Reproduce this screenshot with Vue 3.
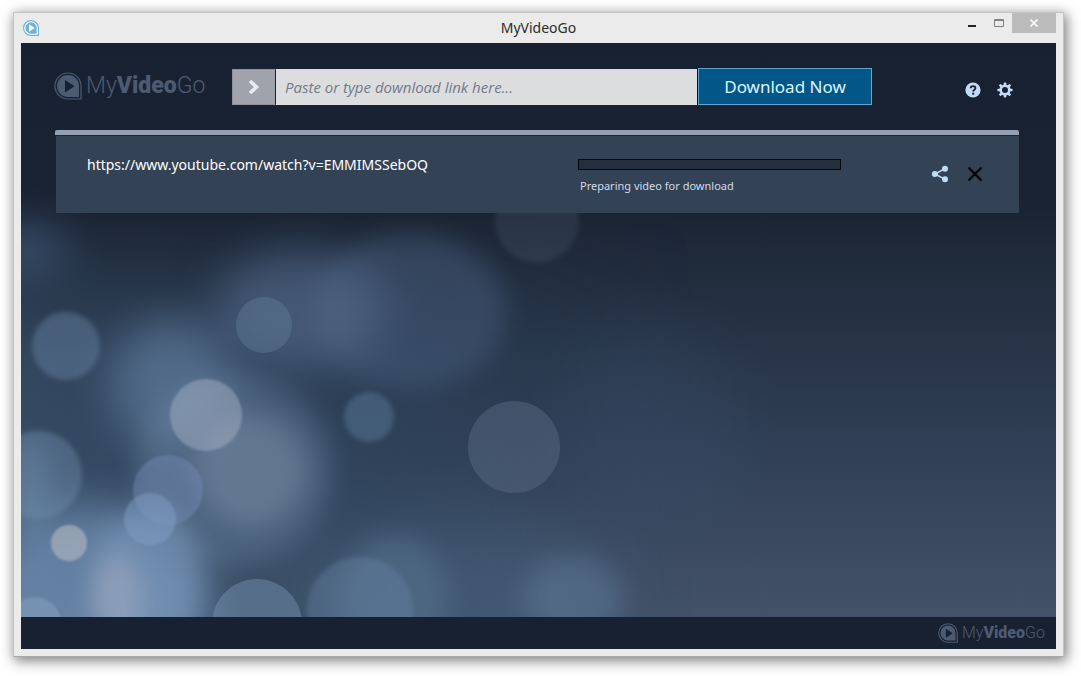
<script setup>
import { ref } from 'vue'

const link = ref('')
const downloads = ref([
  {
    id: 1,
    url: 'https://www.youtube.com/watch?v=EMMIMSSebOQ',
    status: 'Preparing video for download',
    progress: 0,
  },
])

const glows = [
  { cx: 25, cy: 250, rx: 44, ry: 26, fill: '#3f5878', o: 0.75, f: 'soft' },
  { cx: 410, cy: 312, rx: 96, ry: 78, fill: '#4a6080', o: 0.46, f: 'mid' },
  { cx: 300, cy: 310, rx: 85, ry: 58, fill: '#5c7395', o: 0.55, f: 'soft' },
  { cx: 172, cy: 385, rx: 62, ry: 65, fill: '#6885a8', o: 0.6, f: 'soft' },
  { cx: 234, cy: 470, rx: 98, ry: 96, fill: '#7590b0', o: 0.34, f: 'mid' },
  { cx: 250, cy: 470, rx: 56, ry: 56, fill: '#8fa3b8', o: 0.36, f: 'mid' },
  { cx: 90, cy: 605, rx: 120, ry: 100, fill: '#7fa0c8', o: 0.6, f: 'soft' },
  { cx: 148, cy: 580, rx: 54, ry: 70, fill: '#8aa6ca', o: 0.36, f: 'mid' },
  { cx: 116, cy: 605, rx: 26, ry: 50, fill: '#b7b9c8', o: 0.38, f: 'mid' },
  { cx: 30, cy: 490, rx: 20, ry: 50, fill: '#79a0c0', o: 0.35, f: 'mid' },
  { cx: 395, cy: 597, rx: 54, ry: 62, fill: '#5f7b99', o: 0.45, f: 'mid' },
  { cx: 650, cy: 430, rx: 90, ry: 110, fill: '#3d5270', o: 0.24, f: 'wide' },
  { cx: 460, cy: 590, rx: 170, ry: 70, fill: '#53718f', o: 0.3, f: 'wide' },
  { cx: 572, cy: 598, rx: 50, ry: 42, fill: '#64809d', o: 0.42, f: 'mid' },
]

const discs = [
  { cx: 537, cy: 221, r: 42, fill: '#5c6b85', o: 0.22, f: 'edge' },
  { cx: 66, cy: 346, r: 34, fill: '#6c89ab', o: 0.42, f: 'edge' },
  { cx: 264, cy: 325, r: 28, fill: '#6e8ba3', o: 0.32, f: 'crisp' },
  { cx: 206, cy: 415, r: 36, fill: '#a9b4c8', o: 0.46, f: 'fine' },
  { cx: 369, cy: 417, r: 25, fill: '#5e7d9c', o: 0.46, f: 'edge' },
  { cx: 514, cy: 447, r: 46, fill: '#64748f', o: 0.38, f: 'crisp' },
  { cx: 38, cy: 475, r: 44, fill: '#7793b5', o: 0.38, f: 'edge' },
  { cx: 168, cy: 490, r: 35, fill: '#7d93c0', o: 0.38, f: 'fine' },
  { cx: 150, cy: 519, r: 26, fill: '#86a5cb', o: 0.42, f: 'fine' },
  { cx: 69, cy: 543, r: 18, fill: '#b4b8c2', o: 0.62, f: 'fine' },
  { cx: 257, cy: 624, r: 45, fill: '#7f9dbd', o: 0.4, f: 'crisp' },
  { cx: 360, cy: 610, r: 53, fill: '#6c88ab', o: 0.36, f: 'edge' },
  { cx: 35, cy: 623, r: 26, fill: '#a2bbd6', o: 0.3, f: 'fine' },
]

function remove(id) {
  downloads.value = downloads.value.filter((d) => d.id !== id)
}
</script>

<template>
  <div class="desktop">
    <div class="window">
      <div class="titlebar">
        <svg class="app-icon" viewBox="0 0 28 28" aria-hidden="true">
          <path d="M14 1H14A13 13 0 1 0 14 27H27V14A13 13 0 0 0 14 1Z" fill="#fff" stroke="#6db5d2" stroke-width="2" />
          <path d="M14 4A10 10 0 1 0 14 24H24V14A10 10 0 0 0 14 4Z" fill="#6db5d2" />
          <path d="M10.500 7.500V20.500L20.500 14Z" fill="#fff" />
        </svg>
        <h1 class="title">MyVideoGo</h1>
        <div class="controls">
          <button class="ctl" type="button" aria-label="Minimize">
            <svg width="10" height="12" viewBox="0 0 10 12"><path d="M1 8h8v2H1z" fill="#222" /></svg>
          </button>
          <button class="ctl" type="button" aria-label="Maximize">
            <svg width="12" height="12" viewBox="0 0 12 12"><path d="M1.500 2.500h9v7h-9zM1.500 3.500h9" fill="none" stroke="#808080" /></svg>
          </button>
          <button class="ctl close" type="button" aria-label="Close">
            <svg width="10" height="10" viewBox="0 0 10 10"><path d="M1.500 1.500l7 7M8.500 1.500l-7 7" stroke="#fff" stroke-width="1.600" /></svg>
          </button>
        </div>
      </div>

      <div class="client">
        <main class="stage">
          <svg class="backdrop" viewBox="21 43 1035 574" preserveAspectRatio="none" color-interpolation-filters="sRGB" aria-hidden="true">
            <defs>
              <linearGradient id="sky" x1="0" y1="0" x2="0" y2="1">
                <stop offset="0" stop-color="#182131" />
                <stop offset="0.28" stop-color="#1a2333" />
                <stop offset="0.42" stop-color="#222d3e" />
                <stop offset="0.7" stop-color="#303f55" />
                <stop offset="1" stop-color="#435268" />
              </linearGradient>
              <linearGradient id="haze" x1="0" y1="0" x2="1" y2="0">
                <stop offset="0" stop-color="#3a5570" stop-opacity="0.55" />
                <stop offset="0.35" stop-color="#2c4660" stop-opacity="0.4" />
                <stop offset="0.65" stop-color="#2c4660" stop-opacity="0" />
              </linearGradient>
              <linearGradient id="fade" x1="0" y1="0" x2="0" y2="1">
                <stop offset="0.3" stop-color="#000" />
                <stop offset="0.55" stop-color="#fff" />
              </linearGradient>
              <mask id="lower"><rect x="21" y="43" width="1035" height="574" fill="url(#fade)" /></mask>
              <filter id="wide" x="-80%" y="-80%" width="260%" height="260%"><feGaussianBlur stdDeviation="32" /></filter>
              <filter id="soft" x="-80%" y="-80%" width="260%" height="260%"><feGaussianBlur stdDeviation="22" /></filter>
              <filter id="mid" x="-80%" y="-80%" width="260%" height="260%"><feGaussianBlur stdDeviation="12" /></filter>
              <filter id="edge" x="-30%" y="-30%" width="160%" height="160%"><feGaussianBlur stdDeviation="2.500" /></filter>
              <filter id="fine" x="-30%" y="-30%" width="160%" height="160%"><feGaussianBlur stdDeviation="1" /></filter>
              <filter id="crisp" x="-30%" y="-30%" width="160%" height="160%"><feGaussianBlur stdDeviation="0.300" /></filter>
            </defs>
            <rect x="21" y="43" width="1035" height="574" fill="url(#sky)" />
            <rect x="21" y="43" width="1035" height="574" fill="url(#haze)" mask="url(#lower)" />
            <ellipse
              v-for="(g, i) in glows" :key="'g' + i"
              :cx="g.cx" :cy="g.cy" :rx="g.rx" :ry="g.ry"
              :fill="g.fill" :opacity="g.o" :filter="`url(#${g.f})`"
            />
            <circle
              v-for="(d, i) in discs" :key="'d' + i"
              :cx="d.cx" :cy="d.cy" :r="d.r"
              :fill="d.fill" :opacity="d.o" :filter="`url(#${d.f})`"
            />
          </svg>

          <header class="toolbar">
            <div class="brand">
              <svg class="mark" viewBox="0 0 28 28" aria-hidden="true">
                <path d="M14 1A13 13 0 1 0 14 27H27V14A13 13 0 0 0 14 1Z" fill="none" stroke="#4c5b72" stroke-width="1.200" />
                <path d="M14 3A11 11 0 1 0 14 25H25V14A11 11 0 0 0 14 3Z" fill="#4c5b72" />
                <path d="M11 8V20.500L20.500 14.200Z" fill="#182131" />
              </svg>
              <span class="word">My<b>Video</b>Go</span>
            </div>
            <form class="linkbar" @submit.prevent>
              <button class="go" type="button" aria-label="Paste link">
                <svg width="12" height="16" viewBox="0 0 12 16"><path d="M2 2l6.500 6L2 14" fill="none" stroke="#e9ebf3" stroke-width="3.600" /></svg>
              </button>
              <input v-model="link" class="link" type="text" aria-label="Download link" placeholder="Paste or type download link here..." />
              <button class="download" type="submit">Download Now</button>
            </form>
            <div class="tools">
              <button class="icon" type="button" aria-label="Help">
                <svg width="16" height="16" viewBox="0 0 16 16">
                  <circle cx="8" cy="8" r="7.600" fill="#c3dcf6" />
                  <path d="M5.700 6.200C5.700 3.400 10.500 3.500 10.400 6.100C10.400 7.800 8.200 7.700 8.200 9.600" fill="none" stroke="#182131" stroke-width="1.900" />
                  <rect x="7.200" y="10.700" width="2" height="2" fill="#182131" />
                </svg>
              </button>
              <button class="icon" type="button" aria-label="Settings">
                <svg width="16" height="16" viewBox="0 0 16 16">
                  <g fill="#c3dcf6">
                    <rect v-for="n in 4" :key="n" x="6.700" y="0.400" width="2.600" height="15.200" rx="0.800" :transform="`rotate(${n * 45} 8 8)`" />
                    <circle cx="8" cy="8" r="5.600" />
                  </g>
                  <circle cx="8" cy="8" r="3" fill="#182131" />
                </svg>
              </button>
            </div>
          </header>

          <section class="queue" aria-label="Downloads">
            <div class="cap"></div>
            <article v-for="d in downloads" :key="d.id" class="item">
              <p class="url">{{ d.url }}</p>
              <div class="state">
                <div class="track" role="progressbar" aria-valuemin="0" aria-valuemax="100" :aria-valuenow="d.progress" aria-label="Download progress">
                  <div class="fill" :style="{ width: d.progress + '%' }"></div>
                </div>
                <p class="status">{{ d.status }}</p>
              </div>
              <div class="actions">
                <button class="icon" type="button" aria-label="Share">
                  <svg width="18" height="18" viewBox="0 0 18 18">
                    <path d="M14 3.600L4 9l10 5.400" fill="none" stroke="#c3dcf6" stroke-width="1.500" />
                    <g fill="#c3dcf6">
                      <circle cx="14" cy="3.800" r="3" /><circle cx="3.900" cy="9" r="3" /><circle cx="14" cy="14.200" r="3" />
                    </g>
                  </svg>
                </button>
                <button class="icon" type="button" aria-label="Remove" @click="remove(d.id)">
                  <svg width="16" height="16" viewBox="0 0 16 16"><path d="M1.500 1.500l13 13M14.500 1.500l-13 13" stroke="#05070a" stroke-width="2.400" /></svg>
                </button>
              </div>
            </article>
          </section>
        </main>

        <footer class="footer">
          <div class="brand small">
            <svg class="mark" viewBox="0 0 28 28" aria-hidden="true">
              <path d="M14 1A13 13 0 1 0 14 27H27V14A13 13 0 0 0 14 1Z" fill="none" stroke="#4c5b72" stroke-width="1.600" />
              <path d="M14 3.500A10.500 10.500 0 1 0 14 24.500H24.500V14A10.500 10.500 0 0 0 14 3.500Z" fill="#4c5b72" />
              <path d="M11 8V20.500L20.500 14.200Z" fill="#182131" />
            </svg>
            <span class="word">My<b>Video</b>Go</span>
          </div>
        </footer>
      </div>
    </div>
  </div>
</template>

<style>
body {
  margin: 0;
  background: #fff;
}
</style>

<style scoped>
* {
  box-sizing: border-box;
}
.desktop {
  display: flex;
  min-height: 100vh;
  padding: 12px 17px 19px 13px;
  font-family: "Noto Sans", "Open Sans", sans-serif;
}
button {
  font: inherit;
  padding: 0;
  border: 0;
  background: none;
  display: flex;
  align-items: center;
  justify-content: center;
}
p, h1 {
  margin: 0;
}
.window {
  flex: 1;
  display: flex;
  flex-direction: column;
  padding: 0 7px 7px;
  background: #ebebeb;
  border: 1px solid #c4c4c4;
  border-bottom-color: #a8a8a8;
  box-shadow: 2px 3px 12px 1px rgba(0, 0, 0, 0.5);
}
.titlebar {
  display: grid;
  grid-template-columns: 1fr auto 1fr;
  align-items: center;
  height: 30px;
}
.app-icon {
  width: 16px;
  height: 16px;
  margin-left: 2px;
}
.title {
  font-size: 14px;
  line-height: 20px;
  font-weight: 400;
  color: #2b2b2b;
}
.controls {
  display: flex;
  justify-content: flex-end;
  align-self: start;
}
.ctl {
  width: 27px;
  height: 20px;
}
.close {
  width: 44px;
  background: #bcbcbc;
}
.client {
  flex: 1;
  display: flex;
  flex-direction: column;
}
.stage {
  position: relative;
  isolation: isolate;
  flex: 1;
}
.backdrop {
  position: absolute;
  inset: 0;
  width: 100%;
  height: 100%;
  z-index: -1;
}
.toolbar {
  display: flex;
  align-items: center;
  height: 87px;
  padding: 0 43px 0 33px;
}
.brand {
  display: flex;
  align-items: center;
  gap: 4px;
  width: 178px;
  color: #4c5b72;
  font-family: Roboto, "Liberation Sans", sans-serif;
  font-size: 23px;
  line-height: 28px;
  font-weight: 300;
}
.toolbar .brand {
  padding-bottom: 2px;
}
.brand b {
  font-weight: 900;
}
.mark {
  width: 28px;
  height: 28px;
}
.linkbar {
  flex: 1;
  display: flex;
  align-items: center;
  max-width: 640px;
}
.go {
  width: 44px;
  height: 36px;
  background: #a0a3ac;
  border: 1px solid #8f929b;
  border-right-color: #182131;
}
.link {
  flex: 1;
  min-width: 0;
  height: 36px;
  padding: 0 9px;
  border: 0;
  border-right: 1px solid #0c1422;
  border-radius: 0;
  background: #dcdddf;
  font: italic 15px/20px "Open Sans", "Noto Sans", sans-serif;
  color: #333;
}
.link::placeholder {
  color: #737b88;
  opacity: 1;
}
.download {
  width: 174px;
  height: 37px;
  background: #025788;
  border: 1px solid #5ea6cf;
  color: #def4ff;
  font-size: 17px;
}
.tools {
  display: flex;
  gap: 16px;
  margin-left: auto;
  padding-top: 6px;
}
.queue {
  margin: 0 37px 0 34px;
}
.cap {
  height: 5px;
  background: #939fb3;
  border-radius: 2px 2px 0 0;
}
.item {
  display: grid;
  grid-template-columns: 491px 263px 1fr;
  align-items: start;
  height: 78px;
  margin-left: 1px;
  padding: 0 36px 0 31px;
  border-top: 1px solid #1c2737;
  background: #334255;
}
.url {
  padding-top: 19px;
  font-size: 14px;
  line-height: 20px;
  color: #fff;
}
.state {
  padding-top: 23px;
}
.track {
  height: 11px;
  border: 1px solid #05080c;
  background: #242f3e;
}
.fill {
  height: 100%;
  background: #5ea6cf;
}
.status {
  padding: 8px 2px 0;
  font-size: 11px;
  line-height: 16px;
  color: #cfdbea;
}
.actions {
  display: flex;
  align-items: center;
  justify-content: flex-end;
  gap: 18px;
  height: 75px;
}
.footer {
  display: flex;
  justify-content: flex-end;
  align-items: center;
  height: 32px;
  padding: 0 11px;
  background: #182131;
}
.brand.small {
  width: auto;
  gap: 4px;
  font-size: 16px;
  line-height: 20px;
}
.small .mark {
  width: 20px;
  height: 20px;
}
</style>
